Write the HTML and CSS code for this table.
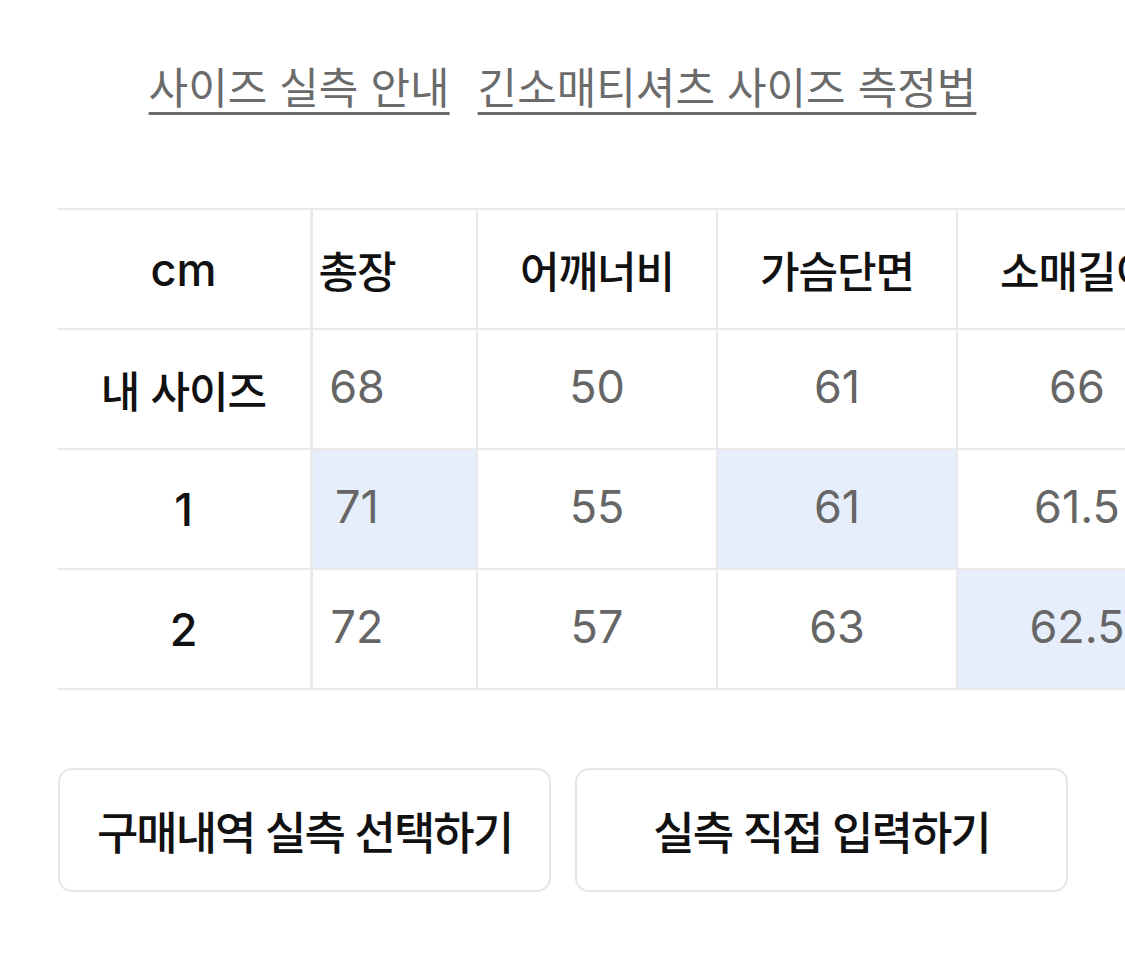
FILE: index.html
```html
<!DOCTYPE html>
<html lang="ko">
<head>
<meta charset="utf-8">
<title>사이즈 실측 안내</title>
<link rel="stylesheet" href="styles.css">
</head>
<body>
<main class="page">
  <nav class="guide-links">
    <a class="guide-link" href="#">사이즈 실측 안내</a>
    <a class="guide-link" href="#">긴소매티셔츠 사이즈 측정법</a>
  </nav>

  <section class="size-table">
    <div class="label-col">
      <div class="cell head latin">cm</div>
      <div class="cell head ko">내 사이즈</div>
      <div class="cell head latin">1</div>
      <div class="cell head latin">2</div>
    </div>
    <div class="data-grid">
      <div class="cell col head ko">총장</div>
      <div class="cell col head ko">어깨너비</div>
      <div class="cell col head ko">가슴단면</div>
      <div class="cell col head ko">소매길이</div>

      <div class="cell col value">68</div>
      <div class="cell col value">50</div>
      <div class="cell col value">61</div>
      <div class="cell col value">66</div>

      <div class="cell col value hl">71</div>
      <div class="cell col value">55</div>
      <div class="cell col value hl">61</div>
      <div class="cell col value">61.5</div>

      <div class="cell col value">72</div>
      <div class="cell col value">57</div>
      <div class="cell col value">63</div>
      <div class="cell col value hl">62.5</div>
    </div>
  </section>

  <div class="actions">
    <button class="action-btn" type="button">구매내역 실측 선택하기</button>
    <button class="action-btn" type="button">실측 직접 입력하기</button>
  </div>
</main>
</body>
</html>
```

FILE: styles.css
```css
* {
  box-sizing: border-box;
}

body {
  margin: 0;
  background: #ffffff;
  font-family: Inter, "Noto Sans CJK KR", sans-serif;
  color: #111111;
}

.page {
  padding-top: 60px;
  overflow: hidden;
}

/* guide links */
.guide-links {
  display: flex;
  justify-content: center;
  gap: 28px;
}

.guide-link {
  font-family: "Noto Sans CJK KR", sans-serif;
  font-size: 43px;
  letter-spacing: 0;
  line-height: 50px;
  color: #6b6b6b;
  text-decoration: underline;
  text-decoration-thickness: 3px;
  text-underline-offset: 8px;
}

/* size table */
.size-table {
  display: flex;
  margin: 98px 0 0 57px;
  border-top: 2px solid #e9e9e9;
  overflow: hidden;
}

.label-col {
  flex: none;
  width: 256px;
  border-right: 3px solid #e9e9e9;
  background: #ffffff;
  position: relative;
  z-index: 1;
}

.data-grid {
  flex: none;
  margin-left: -75px;
  display: grid;
  grid-template-columns: repeat(4, 240px);
  grid-auto-rows: 120px;
}

.cell {
  height: 120px;
  display: flex;
  align-items: center;
  justify-content: center;
  border-bottom: 2px solid #e9e9e9;
  background: #ffffff;
  white-space: nowrap;
}

.col {
  border-right: 2px solid #e9e9e9;
}

.head.ko {
  font-family: "Noto Sans CJK KR", sans-serif;
  font-size: 43px;
  font-weight: 500;
  letter-spacing: -1px;
  color: #111111;
}

.head.latin {
  font-family: Inter, sans-serif;
  font-size: 45px;
  font-weight: 500;
  color: #111111;
}

.value {
  font-family: Inter, sans-serif;
  font-size: 45px;
  color: #666666;
  padding-bottom: 6px;
}

.value.hl {
  background: #e7eefb;
}

/* actions */
.actions {
  display: flex;
  gap: 24px;
  margin-top: 78px;
  padding: 0 57px 0 58px;
}

.action-btn {
  flex: 1;
  height: 124px;
  border: 2px solid #e6e6e6;
  border-radius: 14px;
  background: #ffffff;
  font-family: "Noto Sans CJK KR", sans-serif;
  font-size: 45px;
  font-weight: 500;
  letter-spacing: -2px;
  color: #111111;
  padding: 0;
}
```
